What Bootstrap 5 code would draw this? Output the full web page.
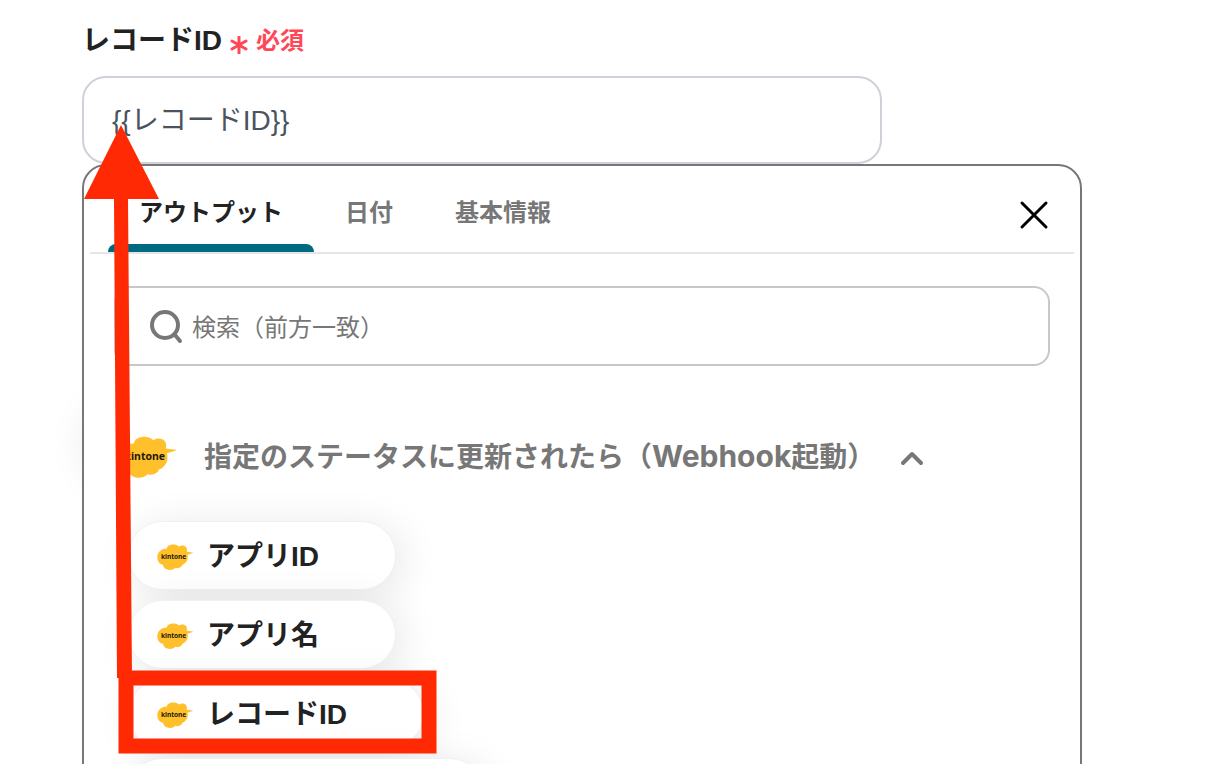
<!DOCTYPE html>
<html lang="ja">
<head>
<meta charset="utf-8">
<meta name="viewport" content="width=device-width, initial-scale=1">
<title>レコードID</title>
<link href="https://cdn.jsdelivr.net/npm/bootstrap@5.3.0/dist/css/bootstrap.min.css" rel="stylesheet">
<style>
body { font-family: "Liberation Sans", "Noto Sans CJK JP", sans-serif; color: #222; background: #fff; }
.page { padding: 16px 82px 0; }
.field-head { height: 60px; padding-bottom: 10px; }
.field-label { font-size: 28px; line-height: 48px; }
.required { font-size: 24px; line-height: 48px; color: #ff4758; }
.field-input { max-width: 800px; height: 88px; padding: 0 28px 4px; border: 2px solid #cdd2d9; border-radius: 24px; font-size: 28px; color: #4b535e; }
.picker { max-width: 1000px; }
.picker-box { position: relative; height: 680px; padding: 0 6px; background: #fff; border: 2px solid #777; border-radius: 24px; }
.halo { position: absolute; top: 250px; left: 12px; width: 60px; height: 60px; border-radius: 30px; box-shadow: 0 0 40px 4px rgba(0, 40, 40, .15); }
.picker-tabs { height: 88px; padding: 0 8px 0 18px; border-bottom: 2px solid #e5e5e5; }
.tab-btn { height: 86px; padding: 8px 31px 0; border: 0; background: none; font-size: 24px; line-height: 72px; font-weight: 700; color: #777; border-radius: 0; position: relative; }
.tab-btn.active { color: #222; }
.tab-btn.active::after { content: ""; position: absolute; left: 0; right: 0; bottom: 0; height: 8px; border-radius: 8px 8px 0 0; background: #006a80; }
.close-btn { padding: 12px 16px 0; border: 0; background: none; }
.picker-body { padding: 32px 24px 0; }
.search-box { height: 80px; padding: 0 32px; border: 2px solid #c8c8c8; border-radius: 16px; }
.search-box input { font-size: 24px; color: #777; padding: 4px 0 0; }
.search-box input::placeholder { color: #777; opacity: 1; }
.group-btn { margin-top: 70px; height: 42px; padding: 0 4px; border: 0; background: none; font-family: Inter, "Noto Sans CJK JP", sans-serif; font-size: 28px; line-height: 42px; font-weight: 700; color: #777; }
.latin { font-size: 30px; line-height: 28px; }
.chips { margin-top: 43px; padding-left: 14px; gap: 10px; }
.chip { height: 69px; padding: 2px 76px 0 28px; border: 1px solid #f1f1f1; border-radius: 35px; background: #fff; box-shadow: 6px 6px 40px rgba(0, 0, 0, .1); font-size: 28px; font-weight: 700; color: #222; gap: 14px; }
.chip-wide { width: 356px; }
.mark-text { font: 700 20px "Noto Sans", sans-serif; fill: #21190a; }
.callout { position: absolute; top: -40px; left: 0; pointer-events: none; }
</style>
</head>
<body>
<svg class="d-none" aria-hidden="true">
  <symbol id="kintone" viewBox="0 0 110 84">
    <path fill="#ffc02c" d="M30 16C31 6 45 2 55 4c5 1 9 3 12 6 7-5 18-4 22 2 3 4 3 9 2 14l18 2c2 0 2 1 0 2L93 35c4 14-3 26-15 31-3 8-12 12-22 9C46 86 22 84 18 66 7 63 1 55 1 44 0 31 10 16 30 16z"/>
    <text class="mark-text" x="12" y="48">kintone</text>
  </symbol>
</svg>
<main class="page vh-100 overflow-hidden">
  <div class="field-head d-flex align-items-center gap-2">
    <label class="field-label fw-bold" for="record">レコードID</label>
    <span class="required fw-bold d-flex align-items-center gap-2">
      <svg width="18" height="18" viewBox="0 0 18 18" class="mt-2" aria-hidden="true"><path d="M9 1v16M2 5l14 8M16 5L2 13" stroke="currentColor" stroke-width="3" stroke-linecap="round"/></svg>必須
    </span>
  </div>
  <input id="record" class="field-input d-block w-100" type="text" value="{{レコードID}}">
  <section class="picker position-relative">
    <div class="halo"></div>
    <div class="picker-box">
      <div class="picker-tabs d-flex justify-content-between">
        <div class="d-flex" role="tablist">
          <button class="tab-btn active" type="button" role="tab" aria-selected="true">アウトプット</button>
          <button class="tab-btn" type="button" role="tab" aria-selected="false">日付</button>
          <button class="tab-btn" type="button" role="tab" aria-selected="false">基本情報</button>
        </div>
        <button class="close-btn" type="button"><svg width="32" height="32" viewBox="0 0 32 32" aria-hidden="true"><path d="M4 4l24 24M28 4L4 28" stroke="#000" stroke-width="3" stroke-linecap="round"/></svg></button>
      </div>
      <div class="picker-body">
        <div class="search-box d-flex align-items-center gap-2">
          <svg class="flex-shrink-0" width="36" height="36" viewBox="0 0 36 36" fill="none" stroke="#777" stroke-width="4" stroke-linecap="round" aria-hidden="true"><circle cx="17" cy="17" r="13"/><path d="M27 27l5 6"/></svg>
          <input class="form-control border-0 shadow-none bg-transparent" type="text" placeholder="検索（前方一致）">
        </div>
        <button class="group-btn d-flex align-items-center" type="button">
          <svg class="me-4" width="58" height="44" aria-hidden="true"><use href="#kintone"/></svg>
          <span class="ms-1">指定のステータスに更新されたら（<span class="latin">Webhook</span>起動）</span>
          <svg class="ms-4" width="26" height="20" viewBox="0 0 26 20" aria-hidden="true"><path d="M4 16l9-9 9 9" fill="none" stroke="#777" stroke-width="4" stroke-linecap="round" stroke-linejoin="round"/></svg>
        </button>
        <div class="chips d-flex flex-column align-items-start">
          <button class="chip d-flex align-items-center" type="button"><svg width="36" height="28" aria-hidden="true"><use href="#kintone"/></svg>アプリID</button>
          <button class="chip d-flex align-items-center" type="button"><svg width="36" height="28" aria-hidden="true"><use href="#kintone"/></svg>アプリ名</button>
          <button class="chip d-flex align-items-center" type="button"><svg width="36" height="28" aria-hidden="true"><use href="#kintone"/></svg>レコードID</button>
          <button class="chip chip-wide d-flex align-items-center" type="button"><svg width="36" height="28" aria-hidden="true"><use href="#kintone"/></svg></button>
        </div>
      </div>
    </div>
    <!-- red arrow from the highlighted chip up to the input -->
    <svg class="callout" width="356" height="632" viewBox="0 0 356 632" aria-hidden="true">
      <path fill="#ff2a04" d="M39 1L77 75H46L50 554H35L32 75H2z"/>
      <rect x="44" y="554" width="303" height="68" fill="none" stroke="#ff2a04" stroke-width="15"/>
    </svg>
  </section>
</main>
<script src="https://cdn.jsdelivr.net/npm/bootstrap@5.3.0/dist/js/bootstrap.bundle.min.js"></script>
</body>
</html>
